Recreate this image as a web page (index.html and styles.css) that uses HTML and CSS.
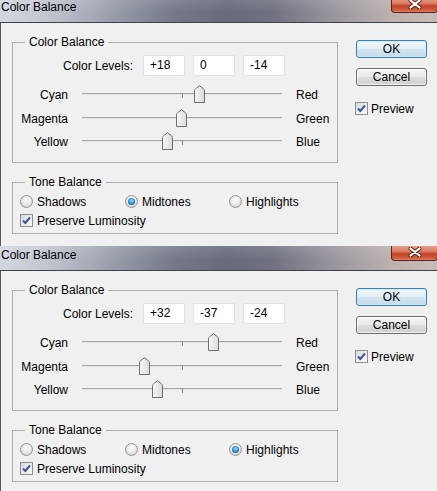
FILE: index.html
```html
<!DOCTYPE html>
<html>
<head>
<meta charset="utf-8">
<link rel="stylesheet" href="styles.css">
</head>
<body>
<div class="screen">

<section class="dialog dialog-first">
  <div class="titlebar">
    <span class="title">Color Balance</span>
    <span class="close"><svg width="16" height="10" viewBox="0 0 16 10"><path d="M3.5 1.5 L12.5 8.5 M12.5 1.5 L3.5 8.5" stroke="#5a2418" stroke-width="4" stroke-linecap="round"/><path d="M3.5 1.5 L12.5 8.5 M12.5 1.5 L3.5 8.5" stroke="#fff" stroke-width="2.2" stroke-linecap="round"/></svg></span>
  </div>
  <div class="body">
    <div class="main">
      <fieldset class="group levels">
        <legend>Color Balance</legend>
        <div class="levels-row">
          <span class="levels-label">Color Levels:</span>
          <span class="field">+18</span>
          <span class="field">0</span>
          <span class="field">-14</span>
        </div>
        <div class="slider-row">
          <span class="lbl-left">Cyan</span>
          <div class="slider"><span class="track"></span><span class="tick"></span><svg class="thumb" style="left:111.5px" width="11" height="18" viewBox="0 0 11 18"><defs><linearGradient id="tg1" x1="0" x2="1"><stop offset="0" stop-color="#f7f7f7"/><stop offset="1" stop-color="#d9d9d9"/></linearGradient></defs><path d="M0.5 17.5 V5.5 Q0.5 4.5 1.5 3.8 L5.5 0.8 L9.5 3.8 Q10.5 4.5 10.5 5.5 V17.5 Z" fill="url(#tg1)" stroke="#6f6f6f"/></svg></div>
          <span class="lbl-right">Red</span>
        </div>
        <div class="slider-row">
          <span class="lbl-left">Magenta</span>
          <div class="slider"><span class="track"></span><span class="tick"></span><svg class="thumb" style="left:93.5px" width="11" height="18" viewBox="0 0 11 18"><path d="M0.5 17.5 V5.5 Q0.5 4.5 1.5 3.8 L5.5 0.8 L9.5 3.8 Q10.5 4.5 10.5 5.5 V17.5 Z" fill="url(#tg1)" stroke="#6f6f6f"/></svg></div>
          <span class="lbl-right">Green</span>
        </div>
        <div class="slider-row">
          <span class="lbl-left">Yellow</span>
          <div class="slider"><span class="track"></span><span class="tick"></span><svg class="thumb" style="left:79.5px" width="11" height="18" viewBox="0 0 11 18"><path d="M0.5 17.5 V5.5 Q0.5 4.5 1.5 3.8 L5.5 0.8 L9.5 3.8 Q10.5 4.5 10.5 5.5 V17.5 Z" fill="url(#tg1)" stroke="#6f6f6f"/></svg></div>
          <span class="lbl-right">Blue</span>
        </div>
      </fieldset>
      <fieldset class="group tone">
        <legend>Tone Balance</legend>
        <div class="radio-row">
          <span class="option"><span class="radio"></span>Shadows</span>
          <span class="option"><span class="radio on"><span class="dot"></span></span>Midtones</span>
          <span class="option"><span class="radio"></span>Highlights</span>
        </div>
        <div class="check-row">
          <span class="box"><svg width="11" height="11" viewBox="0 0 11 11"><path d="M2 5.5 L4.3 8 L9 2.5" fill="none" stroke="#3d5591" stroke-width="2"/></svg></span>Preserve Luminosity
        </div>
      </fieldset>
    </div>
    <div class="side">
      <button class="btn btn-default">OK</button>
      <button class="btn">Cancel</button>
      <div class="preview"><span class="box"><svg width="11" height="11" viewBox="0 0 11 11"><path d="M2 5.5 L4.3 8 L9 2.5" fill="none" stroke="#3d5591" stroke-width="2"/></svg></span>Preview</div>
    </div>
  </div>
</section>

<section class="dialog">
  <div class="titlebar">
    <span class="title">Color Balance</span>
    <span class="close"><svg width="16" height="10" viewBox="0 0 16 10"><path d="M3.5 1.5 L12.5 8.5 M12.5 1.5 L3.5 8.5" stroke="#5a2418" stroke-width="4" stroke-linecap="round"/><path d="M3.5 1.5 L12.5 8.5 M12.5 1.5 L3.5 8.5" stroke="#fff" stroke-width="2.2" stroke-linecap="round"/></svg></span>
  </div>
  <div class="body">
    <div class="main">
      <fieldset class="group levels">
        <legend>Color Balance</legend>
        <div class="levels-row">
          <span class="levels-label">Color Levels:</span>
          <span class="field">+32</span>
          <span class="field">-37</span>
          <span class="field">-24</span>
        </div>
        <div class="slider-row">
          <span class="lbl-left">Cyan</span>
          <div class="slider"><span class="track"></span><span class="tick"></span><svg class="thumb" style="left:125.5px" width="11" height="18" viewBox="0 0 11 18"><path d="M0.5 17.5 V5.5 Q0.5 4.5 1.5 3.8 L5.5 0.8 L9.5 3.8 Q10.5 4.5 10.5 5.5 V17.5 Z" fill="url(#tg1)" stroke="#6f6f6f"/></svg></div>
          <span class="lbl-right">Red</span>
        </div>
        <div class="slider-row">
          <span class="lbl-left">Magenta</span>
          <div class="slider"><span class="track"></span><span class="tick"></span><svg class="thumb" style="left:56.5px" width="11" height="18" viewBox="0 0 11 18"><path d="M0.5 17.5 V5.5 Q0.5 4.5 1.5 3.8 L5.5 0.8 L9.5 3.8 Q10.5 4.5 10.5 5.5 V17.5 Z" fill="url(#tg1)" stroke="#6f6f6f"/></svg></div>
          <span class="lbl-right">Green</span>
        </div>
        <div class="slider-row">
          <span class="lbl-left">Yellow</span>
          <div class="slider"><span class="track"></span><span class="tick"></span><svg class="thumb" style="left:69.5px" width="11" height="18" viewBox="0 0 11 18"><path d="M0.5 17.5 V5.5 Q0.5 4.5 1.5 3.8 L5.5 0.8 L9.5 3.8 Q10.5 4.5 10.5 5.5 V17.5 Z" fill="url(#tg1)" stroke="#6f6f6f"/></svg></div>
          <span class="lbl-right">Blue</span>
        </div>
      </fieldset>
      <fieldset class="group tone">
        <legend>Tone Balance</legend>
        <div class="radio-row">
          <span class="option"><span class="radio"></span>Shadows</span>
          <span class="option"><span class="radio"></span>Midtones</span>
          <span class="option"><span class="radio on"><span class="dot"></span></span>Highlights</span>
        </div>
        <div class="check-row">
          <span class="box"><svg width="11" height="11" viewBox="0 0 11 11"><path d="M2 5.5 L4.3 8 L9 2.5" fill="none" stroke="#3d5591" stroke-width="2"/></svg></span>Preserve Luminosity
        </div>
      </fieldset>
    </div>
    <div class="side">
      <button class="btn btn-default">OK</button>
      <button class="btn">Cancel</button>
      <div class="preview"><span class="box"><svg width="11" height="11" viewBox="0 0 11 11"><path d="M2 5.5 L4.3 8 L9 2.5" fill="none" stroke="#3d5591" stroke-width="2"/></svg></span>Preview</div>
    </div>
  </div>
</section>

</div>
</body>
</html>
```
FILE: styles.css
```css
html, body {
  margin: 0;
  padding: 0;
}
body {
  background: #f0f0f0;
  font-family: "Liberation Sans", Arial, sans-serif;
  font-size: 12px;
  color: #000;
}
.screen {
  width: 437px;
  height: 491px;
  overflow: hidden;
}
.dialog-first {
  margin-top: -2px;
}
.titlebar {
  height: 24px;
  border-bottom: 1px solid #3e414a;
  display: flex;
  justify-content: space-between;
  align-items: flex-start;
  background:
    linear-gradient(to bottom, rgba(255,255,255,0.12), rgba(255,255,255,0) 60%),
    linear-gradient(to right, #d3d7df 0%, #bfc3cc 12%, #959aa7 27%, #747888 40%, #676b7a 52%, #6f7180 62%, #8c8a94 72%, #a9a2a6 82%, #bcb3b1 90%, #c6bdb9 100%);
}
.title {
  padding-left: 1px;
  line-height: 19px;
  font-size: 12px;
  color: #000;
}
.close {
  width: 47px;
  height: 15px;
  margin-right: -1px;
  box-sizing: border-box;
  border: 1px solid #57231a;
  border-top: none;
  border-radius: 0 0 4px 4px;
  background: linear-gradient(to bottom, #e6a08c 0%, #d9785f 40%, #c34327 55%, #cf5a3c 85%, #e08468 100%);
  display: flex;
  justify-content: center;
  align-items: flex-start;
}
.close svg {
  margin-top: 1px;
}
.body {
  height: 223px;
  box-sizing: border-box;
  border-left: 1px solid #5a5a5a;
  padding: 12px 0 0 11px;
  display: flex;
  align-items: flex-start;
}
.main {
  width: 326px;
}
.group {
  margin: 0;
  border: 1px solid #acacac;
  min-width: 0;
  width: 326px;
  box-sizing: border-box;
}
.group legend {
  margin-left: 12px;
  padding: 0 4px;
  line-height: 15px;
  font-size: 12px;
}
.levels {
  padding: 5px 0 7.5px 0;
}
.levels-row {
  display: flex;
  align-items: center;
  height: 21px;
  margin-bottom: 8px;
}
.levels-label {
  width: 120px;
  text-align: right;
  margin-right: 10px;
}
.field {
  width: 42px;
  height: 21px;
  box-sizing: border-box;
  background: #fff;
  border: 1px solid #e3e3e3;
  padding-left: 6px;
  line-height: 19px;
  margin-right: 8px;
}
.slider-row {
  display: flex;
  height: 23.5px;
  line-height: 23.5px;
}
.lbl-left {
  width: 55px;
  text-align: right;
  margin-right: 14px;
}
.lbl-right {
  margin-left: 14px;
}
.slider {
  position: relative;
  width: 200px;
  height: 23.5px;
}
.track {
  position: absolute;
  left: 0;
  right: 0;
  top: 9px;
  height: 1px;
  background: #a6a6a6;
  border-bottom: 1px solid #e4e4e4;
}
.tick {
  position: absolute;
  left: 100px;
  top: 9px;
  width: 1px;
  height: 5px;
  background: #8c8c8c;
}
.thumb {
  position: absolute;
  top: 1px;
}
.tone {
  margin-top: 12px;
  padding: 2px 0 3px 0;
}
.radio-row {
  display: grid;
  grid-template-columns: 105px 104px auto;
  padding-left: 7px;
  height: 19px;
  align-items: center;
}
.option {
  display: flex;
  align-items: center;
  gap: 4px;
}
.radio {
  width: 13px;
  height: 13px;
  box-sizing: border-box;
  border-radius: 50%;
  border: 1px solid #929292;
  background: radial-gradient(circle at 50% 35%, #fbfbfb 0%, #e6e6e6 55%, #cdcdcd 100%);
  display: flex;
  align-items: center;
  justify-content: center;
}
.dot {
  width: 7px;
  height: 7px;
  border-radius: 50%;
  background: radial-gradient(circle at 50% 40%, #9fe0ff 0%, #3a9ad6 45%, #1a5d93 80%, #17456e 100%);
}
.check-row {
  display: flex;
  align-items: center;
  gap: 4px;
  padding-left: 7px;
  height: 19px;
}
.box {
  width: 13px;
  height: 13px;
  box-sizing: border-box;
  border: 1px solid #8e8f8f;
  background: linear-gradient(135deg, #d4d7dc 0%, #eef0f2 60%, #fafafa 100%);
  display: flex;
  align-items: center;
  justify-content: center;
}
.box svg {
  display: block;
}
.side {
  margin-left: 18px;
  padding-top: 5px;
  width: 71px;
  display: flex;
  flex-direction: column;
  align-items: flex-start;
}
.btn {
  width: 71px;
  height: 18px;
  padding: 0;
  margin: 0;
  font-family: "Liberation Sans", Arial, sans-serif;
  font-size: 12px;
  line-height: 16px;
  color: #000;
  border: 1px solid #707070;
  border-radius: 3px;
  background: linear-gradient(to bottom, #f3f3f3 0%, #ebebeb 50%, #dddddd 50%, #d0d0d0 100%);
  box-shadow: inset 0 0 0 1px rgba(255,255,255,0.7);
}
.btn-default {
  border-color: #3c7fb1;
  background: linear-gradient(to bottom, #eef6fb 0%, #e3eff6 50%, #d2e5f0 50%, #c5dcea 100%);
  box-shadow: inset 0 0 0 1px rgba(200,235,250,0.9);
}
.btn + .btn {
  margin-top: 10px;
}
.preview {
  margin-top: 15px;
  margin-left: -1px;
  display: flex;
  align-items: center;
  gap: 3px;
  height: 15px;
}
```
